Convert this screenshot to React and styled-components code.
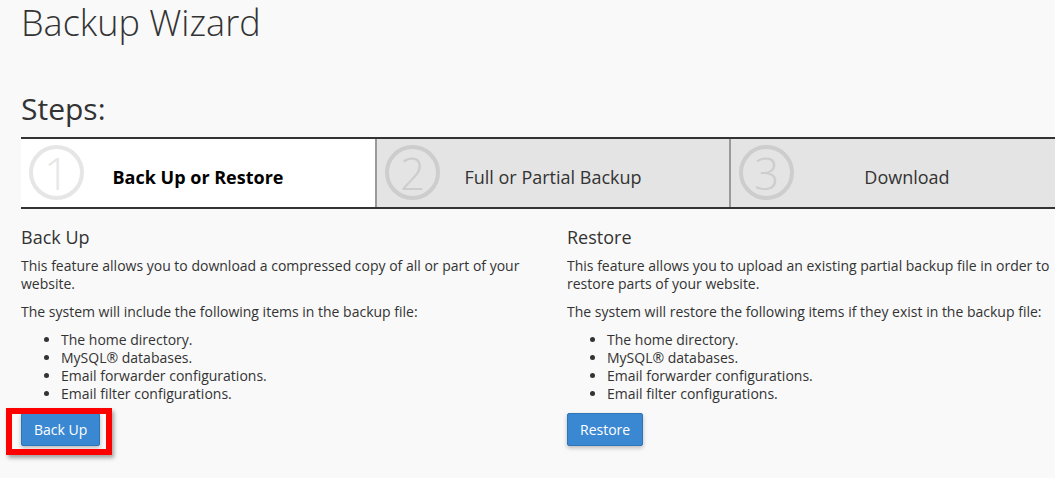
import React from "react";
import styled, { createGlobalStyle } from "styled-components";

const GlobalStyle = createGlobalStyle`
  html, body {
    margin: 0;
    padding: 0;
    background: #f9f9f9;
  }
  body {
    font-family: "Open Sans", "DejaVu Sans", sans-serif;
    color: #333;
  }
`;

const steps = [
  { num: 1, label: "Back Up or Restore" },
  { num: 2, label: "Full or Partial Backup" },
  { num: 3, label: "Download" },
];

const sections = [
  {
    title: "Back Up",
    intro:
      "This feature allows you to download a compressed copy of all or part of your website.",
    lead: "The system will include the following items in the backup file:",
    button: "Back Up",
    highlight: true,
  },
  {
    title: "Restore",
    intro:
      "This feature allows you to upload an existing partial backup file in order to restore parts of your website.",
    lead: "The system will restore the following items if they exist in the backup file:",
    button: "Restore",
  },
];

const items = [
  "The home directory.",
  "MySQL® databases.",
  "Email forwarder configurations.",
  "Email filter configurations.",
];

const App = () => {
  return (
    <>
      <GlobalStyle />
      <Page>
        <Title>Backup Wizard</Title>
        <SubTitle>Steps:</SubTitle>
        <StepBar>
          {steps.map((step, index) => (
            <Step key={step.num} active={index === 0}>
              <StepNum active={index === 0}>{step.num}</StepNum>
              <StepLabel active={index === 0}>{step.label}</StepLabel>
            </Step>
          ))}
        </StepBar>
        <Columns>
          {sections.map((section) => (
            <Column key={section.title}>
              <Heading>{section.title}</Heading>
              <Text>{section.intro}</Text>
              <Text>{section.lead}</Text>
              <List>
                {items.map((item) => (
                  <li key={item}>{item}</li>
                ))}
              </List>
              <ButtonWrap highlight={section.highlight}>
                <Button>{section.button}</Button>
              </ButtonWrap>
            </Column>
          ))}
        </Columns>
      </Page>
    </>
  );
};

export default App;

const Page = styled.div`
  box-sizing: border-box;
  width: 100%;
  min-height: 100vh;
  overflow: hidden;
  padding: 0 0 0 21px;
`;

const Title = styled.h1`
  margin: 0;
  padding-top: 1px;
  font-size: 36px;
  font-weight: 300;
  line-height: 44px;
  color: #333;
`;

const SubTitle = styled.h2`
  margin: 46px 0 0 0;
  font-size: 30px;
  font-weight: 400;
  line-height: 36px;
  color: #333;
`;

const StepBar = styled.div`
  margin-top: 10px;
  width: 1062px;
  display: grid;
  grid-template-columns: repeat(3, 1fr);
  border-top: 2px solid #333;
  border-bottom: 2px solid #333;
  height: 68px;
`;

const Step = styled.div`
  position: relative;
  display: flex;
  align-items: center;
  justify-content: center;
  padding-top: 9px;
  background: ${(p) => (p.active ? "#fff" : "#e4e4e4")};
  & + & {
    border-left: 2px solid #9a9a9a;
  }
`;

const StepNum = styled.span`
  position: absolute;
  left: 8px;
  top: 6px;
  width: 47px;
  height: 47px;
  border: 4px solid ${(p) => (p.active ? "#e6e6e6" : "#cdcdcd")};
  border-radius: 50%;
  display: flex;
  align-items: center;
  justify-content: center;
  font-size: 44px;
  font-weight: 300;
  line-height: 1;
  color: ${(p) => (p.active ? "#e6e6e6" : "#cdcdcd")};
`;

const StepLabel = styled.span`
  font-size: 18px;
  line-height: 25px;
  font-weight: ${(p) => (p.active ? 700 : 400)};
  color: ${(p) => (p.active ? "#000" : "#333")};
`;

const Columns = styled.div`
  display: grid;
  grid-template-columns: 531px 531px;
  column-gap: 15px;
  margin-top: 16px;
`;

const Column = styled.div`
  font-size: 14px;
  line-height: 18px;
`;

const Heading = styled.h3`
  margin: 0 0 7px 0;
  font-size: 18px;
  font-weight: 400;
  line-height: 25px;
  color: #333;
`;

const Text = styled.p`
  margin: 0 0 10px 0;
`;

const List = styled.ul`
  margin: 0 0 10px 0;
  padding-left: 40px;
`;

const ButtonWrap = styled.div`
  position: relative;
  display: inline-block;
  ${(p) =>
    p.highlight &&
    `
    &::after {
      content: "";
      position: absolute;
      left: -15px;
      top: -5px;
      width: 94px;
      height: 35px;
      border: 6px solid #f00;
      box-shadow: 2px 3px 4px rgba(0, 0, 0, 0.35);
      pointer-events: none;
    }
  `}
`;

const Button = styled.button`
  font-family: "Open Sans", "DejaVu Sans", sans-serif;
  font-size: 14px;
  line-height: 19px;
  padding: 6px 12px;
  color: #fff;
  background: #3a88d2;
  border: 1px solid #2f76b8;
  border-radius: 2px;
  box-shadow: 0 2px 4px rgba(0, 0, 0, 0.25);
  cursor: pointer;
`;
